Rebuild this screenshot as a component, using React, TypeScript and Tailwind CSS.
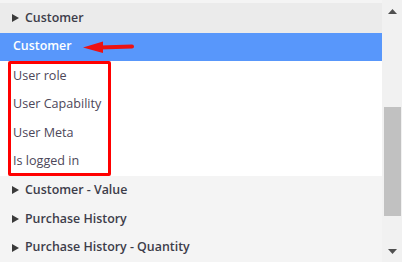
import React from "react";

const Caret = () => (
  <svg width="7" height="8" viewBox="0 0 7 8" className="shrink-0">
    <path d="M0 0 L7 4 L0 8 Z" fill="#3a3a3a" />
  </svg>
);

function GroupRow({ label }: { label: string }) {
  return (
    <div className="h-[30px] flex items-center gap-[6px] pl-[12px] text-[12.4px] font-semibold text-[#3d3d4a]">
      <Caret />
      <span>{label}</span>
    </div>
  );
}

export default function App() {
  const options = ["User role", "User Capability", "User Meta", "Is logged in"];

  return (
    <div
      className="w-[402px] h-[262px] overflow-hidden flex bg-[#f4f4f4]"
      style={{ fontFamily: '"Open Sans", "Liberation Sans", sans-serif' }}
    >
      {/* list */}
      <div className="flex-1 flex flex-col">
        <div className="h-[3px] bg-[#f4f4f4]" />
        <div className="bg-[#ebebeb]">
          <GroupRow label="Customer" />
        </div>

        {/* highlighted group */}
        <div className="relative h-[29px] bg-[#5897fb] flex items-center pl-[13px] text-[12.4px] font-semibold text-white">
          Customer
          <svg width="52" height="12" viewBox="0 0 52 12" className="absolute left-[82px] top-[8px]">
            <path d="M50 5.5 L18 6.5" stroke="#ee1111" strokeWidth="4" strokeLinecap="round" />
            <path d="M1 6.5 L21 0.5 L21 12 Z" fill="#ee1111" />
          </svg>
        </div>

        {/* options */}
        <div className="relative bg-white pt-[1.5px]">
          {options.map((o) => (
            <div key={o} className="h-[28.5px] flex items-center pl-[13px] text-[12.6px] text-[#4d4759]">
              {o}
            </div>
          ))}
          <div className="absolute left-[8px] top-0 w-[103px] h-[115px] border-[3.5px] border-[#ff0000] rounded-[2px]" />
        </div>

        <GroupRow label="Customer - Value" />
        <GroupRow label="Purchase History" />
        <GroupRow label="Purchase History - Quantity" />
      </div>

      {/* scrollbar */}
      <div className="w-[20px] bg-[#f1f1f1] flex flex-col items-center">
        <div className="h-[14px] w-full flex items-end justify-center">
          <svg width="9" height="5" viewBox="0 0 9 5">
            <path d="M0 5 L4.5 0 L9 5 Z" fill="#505050" />
          </svg>
        </div>
        <div className="h-[93px]" />
        <div className="w-[17px] h-[109px] bg-[#c1c1c1] ml-[1px]" />
        <div className="flex-1" />
        <div className="h-[13px] w-full flex items-start justify-center">
          <svg width="9" height="5" viewBox="0 0 9 5">
            <path d="M0 0 L9 0 L4.5 5 Z" fill="#505050" />
          </svg>
        </div>
      </div>
    </div>
  );
}
